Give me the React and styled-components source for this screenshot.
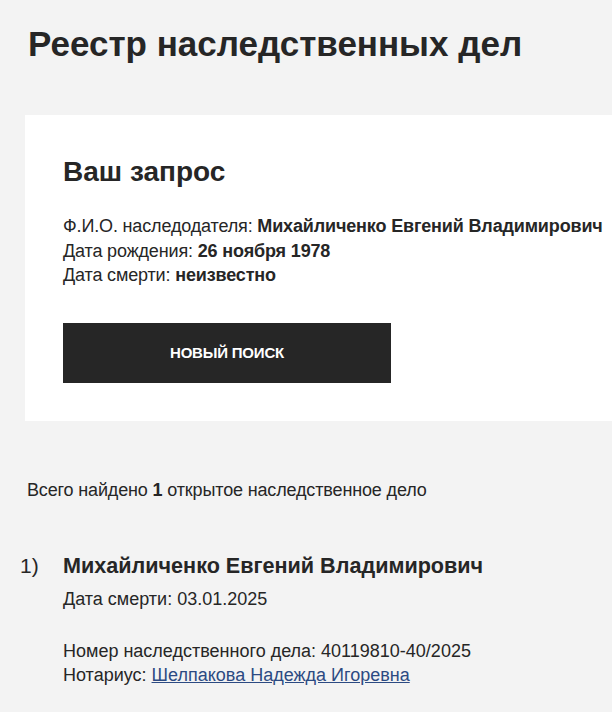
import React from 'react';
import styled, { createGlobalStyle } from "styled-components"

const Global = createGlobalStyle`
	body {
		margin: 0;
		background: #f3f3f3;
		font-family: "Liberation Sans", Arial, sans-serif;
		color: #262626;
	}
`

export default function App () {
	return (
		<Page>
			<Global />
			<Title>Реестр наследственных дел</Title>
			<Card>
				<CardTitle>Ваш запрос</CardTitle>
				<Info>
					<Line $tight>Ф.И.О. наследодателя: <b>Михайличенко Евгений Владимирович</b></Line>
					<Line $tight>Дата рождения: <b>26 ноября 1978</b></Line>
					<Line $tight>Дата смерти: <b>неизвестно</b></Line>
				</Info>
				<Button>НОВЫЙ ПОИСК</Button>
			</Card>
			<Summary>Всего найдено <b>1</b> открытое наследственное дело</Summary>
			<Result>
				<Num>1)</Num>
				<Body>
					<Name>Михайличенко Евгений Владимирович</Name>
					<Line>Дата смерти: 03.01.2025</Line>
					<Details>
						<Line>Номер наследственного дела: 40119810-40/2025</Line>
						<Line>Нотариус: <NotaryLink href="#">Шелпакова Надежда Игоревна</NotaryLink></Line>
					</Details>
				</Body>
			</Result>
		</Page>
	);
}

const Page = styled.div`
	padding: 22px 0 0 0;
	overflow: hidden;
	height: 712px;
	box-sizing: border-box;
`

const Title = styled.h1`
	margin: 0 0 0 28px;
	font-size: 35px;
	font-weight: 700;
	line-height: 44px;
`

const Card = styled.section`
	margin: 49px 0 0 25px;
	background: #fff;
	padding: 39px 38px 38px;
	height: 306px;
	box-sizing: border-box;
`

const CardTitle = styled.h2`
	margin: 0;
	font-size: 28px;
	font-weight: 700;
	line-height: 36px;
`

const Info = styled.div`
	margin-top: 24px;
`

const Line = styled.div`
	font-size: 18px;
	line-height: 24.5px;
	letter-spacing: ${p => (p.$tight ? "-0.15px" : "0")};
	white-space: nowrap;
	b {
		font-weight: 700;
	}
`

const Button = styled.button`
	margin-top: 35px;
	width: 328px;
	height: 60px;
	border: 0;
	background: #262626;
	color: #fff;
	font-family: inherit;
	font-size: 15px;
	font-weight: 700;
	letter-spacing: -0.2px;
`

const Summary = styled.p`
	margin: 57px 0 0 27px;
	font-size: 18px;
	line-height: 24px;
	letter-spacing: -0.15px;
`

const Result = styled.div`
	display: flex;
	margin: 50px 0 0 20px;
`

const Num = styled.div`
	width: 43px;
	font-size: 21px;
	line-height: 28px;
`

const Body = styled.div`
	display: flex;
	flex-direction: column;
`

const Name = styled.div`
	font-size: 21.6px;
	font-weight: 700;
	line-height: 28px;
	margin-bottom: 7px;
`

const Details = styled.div`
	margin-top: 27px;
`

const NotaryLink = styled.a`
	color: #2c4a82;
	text-decoration: underline;
`
